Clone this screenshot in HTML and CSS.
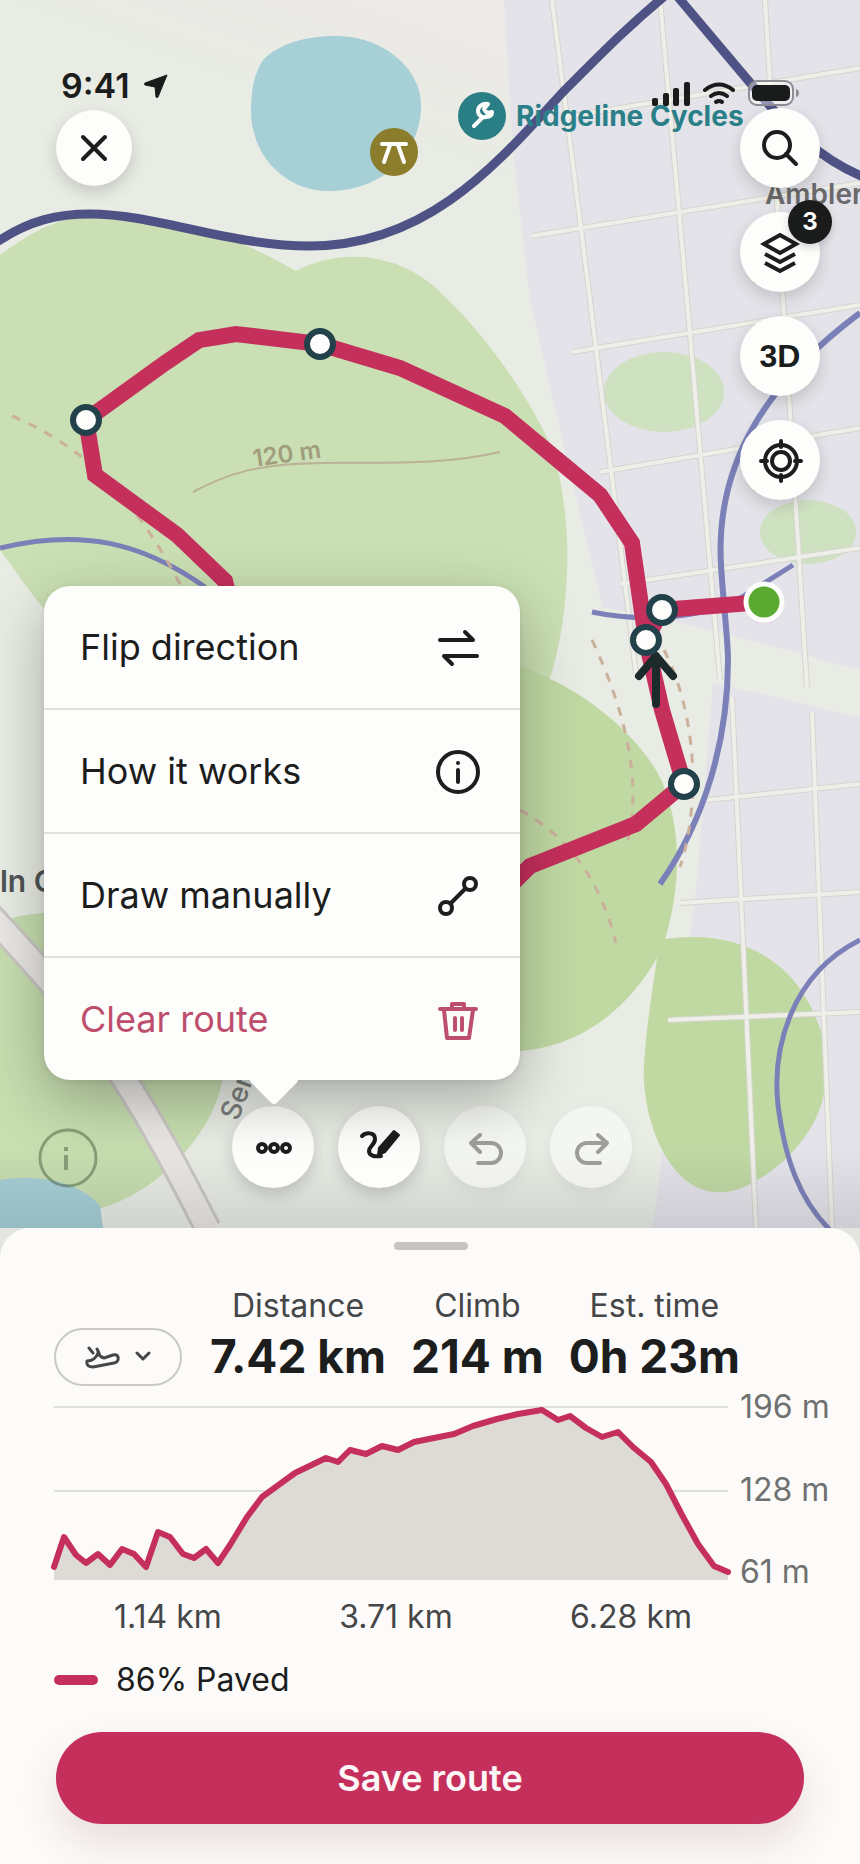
FILE: index.html
```html
<!DOCTYPE html>
<html lang="en">
<head>
<meta charset="UTF-8">
<meta name="viewport" content="width=device-width, initial-scale=1.0">
<title>Route planner</title>
<link rel="stylesheet" href="styles.css">
</head>
<body>

<div class="screen">
    <main class="map">
        <svg class="map-canvas" viewBox="0 0 860 1228" preserveAspectRatio="xMidYMid slice" role="img" aria-label="Route map">
            <defs>
                <linearGradient id="land" x1="0" y1="1" x2="1" y2="0">
                    <stop offset="0.5" stop-color="#e8ece4"/>
                    <stop offset="0.7" stop-color="#ece9e6"/>
                </linearGradient>
            </defs>
            <rect width="860" height="300" fill="url(#land)"/>

            <!-- town -->
            <g fill="#e4e3e9">
                <path d="M504 0 L513 150 L530 300 L567 460 L603 607 L720 632 L860 670 V0 Z"/>
                <path d="M713 683 L860 717 V1228 H653 L697 880 Z"/>
            </g>

            <!-- parks -->
            <path fill="#cadfb3" d="M0 255 C30 233 60 215 100 215 C190 215 250 245 296 271 C330 252 385 248 430 283 C485 330 530 400 549 442 C575 510 572 610 549 682 L300 760 L120 680 C60 640 30 590 0 550 Z"/>
            <path fill="#c0d9a3" d="M400 640 C460 645 520 663 550 679 C600 702 650 748 665 789 C682 835 680 890 665 939 C662 950 660 954 657 958 C630 1005 585 1046 520 1051 L400 1030 Z"/>
            <path fill="#c0d9a3" d="M664 939 C740 928 785 962 806 998 C828 1035 828 1065 824 1093 C818 1130 785 1165 757 1180 C730 1198 700 1196 680 1175 C650 1145 642 1090 644 1065 C646 1030 651 1000 657 958 Z"/>
            <g fill="#cee1c0">
                <ellipse cx="664" cy="392" rx="60" ry="40"/>
                <ellipse cx="808" cy="532" rx="48" ry="32"/>
            </g>
            <path fill="#c7deb0" d="M0 921 C50 906 130 905 180 950 C225 990 230 1050 220 1090 C205 1145 150 1195 101 1208 L0 1210 Z"/>

            <!-- water -->
            <g fill="#a6cfd6">
                <path d="M263 60 C280 42 310 36 335 36 C385 36 421 70 421 105 C421 155 380 191 330 191 C280 191 251 150 251 112 C251 90 254 74 263 60 Z"/>
                <path d="M0 1180 C40 1174 80 1182 100 1206 L103 1228 H0 Z"/>
            </g>

            <!-- bypass -->
            <g fill="none">
                <path stroke="#c9c6c3" stroke-width="28" d="M-50 873 L0 926 C50 980 85 1020 125 1080 C160 1135 180 1175 208 1229"/>
                <path stroke="#e9e7e4" stroke-width="22" d="M-50 873 L0 926 C50 980 85 1020 125 1080 C160 1135 180 1175 209 1231"/>
            </g>

            <!-- streets: casing first, then fill -->
            <defs>
                <path id="streets" d="M552 0 L590 300 L636 673 M660 0 L687 300 L720 680 M765 0 L783 300 L807 687 M732 697 L756 1228 M812 712 L832 1228 M566 117 L860 68 M532 236 L860 183 M572 352 L860 305 M600 472 L860 428 M621 584 L860 548 M707 800 L860 784 M680 903 L860 892 M668 1020 L860 1012"/>
            </defs>
            <g fill="none">
                <use href="#streets" stroke="#d6d4cf" stroke-width="6"/>
                <use href="#streets" stroke="#efefe9" stroke-width="4"/>
            </g>

            <!-- contour -->
            <path fill="none" stroke="#bbb198" stroke-width="2" d="M193 492 C230 472 260 464 320 463 C380 462 440 466 500 452"/>
            <text class="label-contour" transform="translate(254 467) rotate(-8)">120 m</text>

            <!-- trails and rivers -->
            <g fill="none" stroke="#7b81b8" stroke-width="5">
                <path d="M0 548 C80 529 140 541 205 587"/>
                <path stroke-width="6" d="M860 313 C770 380 715 460 721 565 C723 600 728 640 728 660 C728 740 705 820 660 884"/>
                <path d="M592 612 C640 622 700 620 742 597 L793 565"/>
                <path d="M860 940 C790 975 772 1050 778 1105 C785 1160 800 1200 830 1230"/>
            </g>
            <g fill="none" stroke="#cbb09c" stroke-width="3" stroke-dasharray="9 9">
                <path d="M12 416 C80 445 130 490 180 584"/>
                <path d="M592 640 C625 710 642 780 628 840"/>
                <path d="M664 650 C695 710 702 800 680 867"/>
                <path d="M520 810 C570 838 600 880 616 943"/>
            </g>

            <!-- highway -->
            <path fill="none" stroke="#4e5285" stroke-width="9" d="M-6 244 C30 219 60 214 90 214 C155 214 230 246 310 246 C430 246 500 160 563 92 C600 55 630 24 672 -10 L752 85 C785 125 820 160 866 178"/>

            <!-- route -->
            <g fill="none" stroke="#c52f5c" stroke-width="16">
                <path d="M240 640 L225 581 L177 535 L95 475 L86 420 L165 363 L199 340 L236 334 L320 344 L400 368 L505 416 L600 495 L632 543 L646 640 L662 710 L684 784 L636 824 L530 866 L490 906"/>
                <path d="M646 640 L662 610 L764 602"/>
            </g>
            <path class="heading" d="M656 704 V656 M639 676 L656 656 L673 676"/>
            <g fill="#fdfdfc" stroke="#22414a" stroke-width="6">
                <circle cx="86" cy="420" r="13"/>
                <circle cx="320" cy="344" r="13"/>
                <circle cx="662" cy="610" r="13"/>
                <circle cx="646" cy="640" r="13"/>
                <circle cx="684" cy="784" r="13"/>
            </g>
            <circle cx="764" cy="602" r="18" fill="#5aaa31" stroke="#fdfdfc" stroke-width="5"/>

            <!-- places -->
            <circle cx="394" cy="152" r="24" fill="#8b7d2b"/>
            <path class="poi-glyph" d="M382 144 H406 M390 145 L384 162 M398 145 L404 162"/>
            <circle cx="482" cy="116" r="24" fill="#2a7f86"/>
            <path class="poi-glyph" d="M474 126 L483 117 M488 104 C482 103 478 107 478 111 C478 115 482 118 486 117 C490 117 492 115 492 112 M488 104 L484 109 L487 113 L492 112"/>
            <text class="label-shop" x="516" y="126">Ridgeline Cycles</text>
            <text class="label-town" x="765" y="204">Ambler</text>
            <text class="label-district" x="0" y="892">ln C</text>
            <text class="label-street" transform="translate(238 1122) rotate(-70)">Ser</text>
        </svg>

        <div class="status-bar">
            <div class="status-left">
                <span class="time">9:41</span>
                <svg width="24" height="24" viewBox="0 0 24 24"><path fill="#1a1c1c" stroke="#1a1c1c" stroke-width="1" stroke-linejoin="round" d="M23 1 L14 23 Q13 24 12 23 L11 13 L1 11 Q0 10 1 9 Z"/></svg>
            </div>
            <div class="status-right">
                <svg width="38" height="24" viewBox="0 0 38 24" fill="#1a1c1c">
                    <rect y="16" width="6" height="8" rx="2"/>
                    <rect x="11" y="11" width="6" height="13" rx="2"/>
                    <rect x="21" y="6" width="6" height="18" rx="2"/>
                    <rect x="32" y="0" width="6" height="24" rx="2"/>
                </svg>
                <svg width="34" height="24" viewBox="0 0 34 24" fill="none" stroke="#1a1c1c" stroke-width="4" stroke-linecap="round">
                    <path d="M3 8 Q17 -3 31 8 M9 14 Q17 8 25 14 M14 20 Q17 18 20 20"/>
                </svg>
                <svg width="51" height="26" viewBox="0 0 51 26">
                    <rect x="1" y="1" width="44" height="24" rx="8" fill="#ffffff" fill-opacity="0.4" stroke="#8d8d94" stroke-width="2"/>
                    <rect x="4" y="5" width="38" height="16" rx="5" fill="#1a1c1c"/>
                    <path fill="#8d8d94" d="M48 9 Q51 10 51 13 Q51 16 48 17 Z"/>
                </svg>
            </div>
        </div>

        <div class="map-controls">
            <button class="round-button close-button" aria-label="Close">
                <svg width="28" height="28" viewBox="0 0 28 28" class="icon"><path d="M3 3 L25 25 M25 3 L3 25"/></svg>
            </button>
            <div class="control-stack">
                <button class="round-button" aria-label="Search">
                    <svg width="40" height="40" viewBox="0 0 40 40" class="icon"><circle cx="17" cy="17" r="13"/><path d="M26 26 L36 36"/></svg>
                </button>
                <button class="round-button" aria-label="Map layers">
                    <svg width="40" height="44" viewBox="0 0 40 44" class="icon layers"><path d="M20 5 L36 14 L20 23 L4 14 Z M5 24 L20 32 L35 24 M5 33 L20 41 L35 33"/></svg>
                    <span class="badge">3</span>
                </button>
                <button class="round-button label-3d">3D</button>
                <button class="round-button" aria-label="Locate me">
                    <svg width="48" height="48" viewBox="0 0 48 48" class="icon"><circle cx="25" cy="25" r="16"/><circle cx="25" cy="25" r="9"/><path d="M25 5 V11 M25 39 V45 M5 25 H11 M39 25 H45"/></svg>
                </button>
            </div>
        </div>

        <div class="map-footer">
            <button class="info-button" aria-label="Map information">
                <svg width="60" height="60" viewBox="0 0 60 60" fill="none" stroke="currentColor"><circle cx="30" cy="30" r="28" stroke-width="3"/><path stroke-width="4" d="M28 27 V42 M28 19 V23"/></svg>
            </button>
            <div class="toolbar">
                <div class="menu-anchor">
                    <button class="round-button" aria-label="More options" aria-expanded="true">
                        <svg width="44" height="44" viewBox="0 0 44 44" class="icon"><circle cx="11" cy="23" r="4"/><circle cx="23" cy="23" r="4"/><circle cx="35" cy="23" r="4"/></svg>
                    </button>
                    <div class="menu" role="menu">
                        <button class="menu-item" role="menuitem">
                            Flip direction
                            <svg width="52" height="52" viewBox="0 0 52 52" class="icon"><path d="M8 19 H41 L33 11 M45 35 H12 L20 43"/></svg>
                        </button>
                        <button class="menu-item" role="menuitem">
                            How it works
                            <svg width="52" height="52" viewBox="0 0 52 52" class="icon"><circle cx="26" cy="27" r="20"/><path d="M26 25 V37 M26 18 V18"/></svg>
                        </button>
                        <button class="menu-item" role="menuitem">
                            Draw manually
                            <svg width="52" height="52" viewBox="0 0 52 52" class="icon"><circle cx="38" cy="15" r="6"/><circle cx="14" cy="39" r="6"/><path d="M19 34 L33 20"/></svg>
                        </button>
                        <button class="menu-item danger" role="menuitem">
                            Clear route
                            <svg width="52" height="52" viewBox="0 0 52 52" class="icon"><path d="M8 16 H44 M20 15 V11 H32 V15 M12 17 L15 45 H37 L41 17 M23 25 V37 M30 25 V37"/></svg>
                        </button>
                    </div>
                </div>
                <button class="round-button" aria-label="Draw route">
                    <svg width="44" height="44" viewBox="0 0 44 44" class="icon"><path d="M5 11 C9 7 18 7 18 14 C18 20 12 21 12 26 C12 31 18 32 24 31"/><path fill="currentColor" stroke-width="2" d="M21 30 L22 23 L37 6 L42 10 L28 27 Z"/></svg>
                </button>
                <button class="round-button" aria-label="Undo" disabled>
                    <svg width="44" height="44" viewBox="0 0 44 44" class="icon"><path d="M17 10 L8 18 L17 27 M8 18 H28 A10 10 0 0 1 28 38 H15"/></svg>
                </button>
                <button class="round-button" aria-label="Redo" disabled>
                    <svg width="44" height="44" viewBox="0 0 44 44" class="icon"><path d="M29 10 L38 18 L29 27 M38 18 H18 A10 10 0 0 0 18 38 H31"/></svg>
                </button>
            </div>
        </div>
    </main>

    <section class="sheet">
        <div class="handle"></div>

        <div class="summary">
            <button class="activity" aria-label="Activity: running">
                <svg width="36" height="24" viewBox="0 0 36 24"><path d="M3 16 Q2 22 9 22 L30 18 Q35 17 34 12 Q33 9 29 10 L20 13 Q16 12 14 8 Q11 16 3 16 Z M5 3 L9 8 M13 4 L15 8"/></svg>
                <svg width="18" height="12" viewBox="0 0 18 12"><path d="M3 2 L9 8 L15 2"/></svg>
            </button>
            <dl class="stats">
                <div class="stat">
                    <dt>Distance</dt>
                    <dd>7.42 km</dd>
                </div>
                <div class="stat">
                    <dt>Climb</dt>
                    <dd>214 m</dd>
                </div>
                <div class="stat">
                    <dt>Est. time</dt>
                    <dd>0h 23m</dd>
                </div>
            </dl>
        </div>

        <div class="chart">
            <svg class="profile" viewBox="54 1404 674 176" preserveAspectRatio="none" role="img" aria-label="Elevation profile">
                <path stroke="#dededb" stroke-width="2" d="M54 1407 H728 M54 1491 H728"/>
                <path fill="#dedbd6" d="M54 1580 V1567 L64 1537 L76 1555 L86 1563 L98 1554 L110 1565 L122 1549 L134 1554 L146 1567 L158 1532 L170 1537 L183 1554 L194 1558 L206 1549 L218 1563 L230 1545 L247 1517 L262 1497 L295 1473 L326 1458 L338 1462 L350 1450 L366 1454 L382 1446 L398 1450 L414 1442 L454 1434 L473 1426 L497 1419 L518 1414 L542 1410 L558 1420 L570 1416 L586 1428 L602 1437 L618 1432 L633 1447 L651 1462 L666 1484 L682 1515 L698 1544 L714 1566 L728 1572 V1580 Z"/>
                <path class="profile-line" d="M54 1567 L64 1537 L76 1555 L86 1563 L98 1554 L110 1565 L122 1549 L134 1554 L146 1567 L158 1532 L170 1537 L183 1554 L194 1558 L206 1549 L218 1563 L230 1545 L247 1517 L262 1497 L295 1473 L326 1458 L338 1462 L350 1450 L366 1454 L382 1446 L398 1450 L414 1442 L454 1434 L473 1426 L497 1419 L518 1414 L542 1410 L558 1420 L570 1416 L586 1428 L602 1437 L618 1432 L633 1447 L651 1462 L666 1484 L682 1515 L698 1544 L714 1566 L728 1572"/>
            </svg>
            <div class="y-axis">
                <span>196 m</span>
                <span>128 m</span>
                <span>61 m</span>
            </div>
            <div class="x-axis">
                <span>1.14 km</span>
                <span>3.71 km</span>
                <span>6.28 km</span>
            </div>
        </div>

        <div class="legend"><span class="swatch"></span>86% Paved</div>

        <button class="save-button">Save route</button>
    </section>
</div>

</body>
</html>
```
FILE: styles.css
```css
* {
    box-sizing: border-box;
}
body {
    margin: 0;
    font-family: Inter, "Liberation Sans", sans-serif;
    color: #1c1d1d;
    background-color: #e3e6de;
}
button {
    font: inherit;
    color: inherit;
    padding: 0;
    border: none;
    background: none;
    cursor: pointer;
}
svg {
    display: block;
    flex: none;
}
.screen {
    display: flex;
    flex-direction: column;
    min-height: 100vh;
}

/* map */
.map {
    position: relative;
    flex: 1;
    display: flex;
    flex-direction: column;
    background-color: #e8ece4;
    overflow: hidden;
}
.map-canvas {
    position: absolute;
    inset: 0;
    width: 100%;
    height: 100%;
}
.map::after {
    content: "";
    position: absolute;
    inset: auto 0 0;
    height: 80px;
    background: linear-gradient(transparent, rgba(40, 40, 50, 0.12));
    pointer-events: none;
}
.heading {
    fill: none;
    stroke: #1c2a2c;
    stroke-width: 8;
    stroke-linecap: round;
    stroke-linejoin: round;
}
.poi-glyph {
    fill: none;
    stroke: #fdfdfc;
    stroke-width: 4;
    stroke-linecap: round;
    stroke-linejoin: round;
}
.label-contour {
    font-size: 24px;
    font-weight: 600;
    fill: #a09e7d;
}
.label-shop {
    font-size: 28px;
    font-weight: 700;
    fill: #2a8088;
}
.label-town {
    font-size: 28px;
    font-weight: 600;
    fill: #6a696b;
}
.label-district {
    font-size: 30px;
    font-weight: 600;
    fill: #505355;
}
.label-street {
    font-size: 28px;
    font-weight: 500;
    fill: #7c7f7e;
}

/* status bar */
.status-bar {
    position: relative;
    display: flex;
    justify-content: space-between;
    padding: 66px 61px 2px;
}
.status-left {
    display: flex;
    align-items: center;
    gap: 14px;
}
.time {
    font-size: 34px;
    font-weight: 600;
    line-height: 40px;
}
.status-right {
    display: flex;
    align-items: flex-end;
    gap: 12px;
}

/* floating controls */
.map-controls {
    position: relative;
    display: flex;
    justify-content: space-between;
    align-items: flex-start;
    padding: 0 40px 0 56px;
}
.control-stack {
    display: flex;
    flex-direction: column;
    gap: 24px;
}
.round-button {
    position: relative;
    display: flex;
    align-items: center;
    justify-content: center;
    width: 80px;
    height: 80px;
    border-radius: 50%;
    background-color: #fdfdfc;
    box-shadow: 0 6px 16px rgba(0, 0, 0, 0.16);
}
.round-button:disabled {
    background-color: rgba(255, 255, 255, 0.5);
    box-shadow: 0 6px 16px rgba(0, 0, 0, 0.05);
    cursor: default;
}
.round-button:disabled .icon {
    opacity: 0.4;
}
.close-button {
    width: 76px;
    height: 76px;
    margin-top: 2px;
}
.label-3d {
    font-size: 32px;
    font-weight: 700;
    font-family: "Liberation Sans", sans-serif;
}
.icon {
    fill: none;
    stroke: currentColor;
    stroke-width: 4;
    stroke-linecap: round;
    stroke-linejoin: round;
}
.layers {
    stroke-linecap: butt;
    stroke-linejoin: miter;
}
.badge {
    position: absolute;
    top: -12px;
    right: -12px;
    width: 44px;
    height: 44px;
    border-radius: 50%;
    background-color: #1a1c1c;
    color: #fdfdfc;
    font-size: 24px;
    font-weight: 700;
    line-height: 44px;
    text-align: center;
    box-shadow: 0 4px 8px rgba(0, 0, 0, 0.16);
}
.map-footer {
    position: relative;
    z-index: 1;
    display: grid;
    grid-template-columns: 1fr auto 1fr;
    align-items: end;
    margin-top: auto;
    padding: 0 34px 40px 38px;
}
.info-button {
    justify-self: start;
    color: rgba(60, 80, 50, 0.45);
}
.toolbar {
    display: flex;
    gap: 24px;
}
.toolbar .round-button {
    width: 82px;
    height: 82px;
}

/* popup menu */
.menu-anchor {
    position: relative;
    z-index: 1;
}
.menu {
    position: absolute;
    left: -188px;
    bottom: calc(100% + 26px);
    width: 476px;
    border-radius: 26px;
    background-color: #fdfdfc;
    box-shadow: 0 20px 60px rgba(0, 0, 0, 0.28), 0 2px 6px rgba(0, 0, 0, 0.08);
}
.menu::after {
    content: "";
    position: absolute;
    left: 212px;
    bottom: -18px;
    width: 36px;
    height: 36px;
    border-radius: 4px;
    background-color: #fdfdfc;
    transform: rotate(45deg);
}
.menu-item {
    position: relative;
    z-index: 1;
    display: flex;
    align-items: center;
    justify-content: space-between;
    width: 100%;
    height: 122px;
    padding: 0 36px;
    font-size: 36px;
}
.menu-item + .menu-item {
    height: 124px;
    border-top: 2px solid #e0e0de;
}
.danger {
    color: #bd4e6e;
}

/* bottom sheet */
.sheet {
    display: flex;
    flex-direction: column;
    padding: 14px 28px 40px 54px;
    border-radius: 30px 30px 0 0;
    background-color: #fcfbf9;
}
.handle {
    align-self: center;
    width: 74px;
    height: 8px;
    margin-right: 24px;
    border-radius: 4px;
    background-color: #c6c5c2;
}
.summary {
    display: flex;
    align-items: flex-end;
    gap: 28px;
    margin-top: 36px;
}
.activity {
    display: flex;
    align-items: center;
    justify-content: center;
    gap: 14px;
    width: 128px;
    height: 58px;
    border: 2px solid #cac9c6;
    border-radius: 29px;
}
.activity svg {
    fill: none;
    stroke: #454647;
    stroke-width: 3;
    stroke-linecap: round;
    stroke-linejoin: round;
}
.stats {
    display: flex;
    gap: 25px;
    margin: 0;
}
.stat {
    text-align: center;
}
.stat dt {
    font-size: 32px;
    line-height: 40px;
    color: #454647;
}
.stat dd {
    margin: 0;
    font-size: 46px;
    font-weight: 700;
    line-height: 60px;
    white-space: nowrap;
}
.chart {
    display: grid;
    grid-template-columns: 1fr 92px;
    column-gap: 12px;
    margin-top: 18px;
    font-size: 32px;
    line-height: 40px;
}
.profile {
    width: 100%;
    height: 176px;
    overflow: visible;
}
.profile-line {
    fill: none;
    stroke: #c52f5c;
    stroke-width: 6;
    stroke-linecap: round;
    stroke-linejoin: round;
}
.y-axis {
    display: flex;
    flex-direction: column;
    justify-content: space-between;
    margin: -17px 0 -12px;
    color: #6f7170;
    white-space: nowrap;
}
.x-axis {
    display: flex;
    justify-content: space-between;
    margin-top: 17px;
    padding: 0 36px 0 60px;
    color: #454647;
}
.legend {
    display: flex;
    align-items: center;
    gap: 18px;
    margin-top: 23px;
    font-size: 32px;
    line-height: 40px;
}
.swatch {
    width: 44px;
    height: 10px;
    border-radius: 5px;
    background-color: #c52f5c;
}
.save-button {
    height: 92px;
    margin: 32px 28px 0 2px;
    border-radius: 46px;
    background-color: #c52f5c;
    color: #fdf6f7;
    font-size: 36px;
    font-weight: 600;
    box-shadow: 0 20px 40px rgba(120, 40, 60, 0.14);
}
```
